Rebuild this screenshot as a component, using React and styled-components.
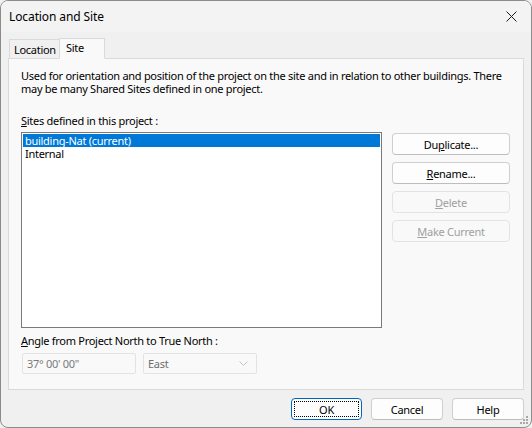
import React from "react";
import styled, { createGlobalStyle } from "styled-components";

const Global = createGlobalStyle`
  html, body {
    margin: 0;
    padding: 0;
    background: #f0f0f0;
  }
  body {
    font-family: "Noto Sans", "Liberation Sans", sans-serif;
    font-size: 11px;
    letter-spacing: -0.28px;
    color: #000;
  }
  * { box-sizing: border-box; }
`;

const Window = styled.div`
  position: relative;
  width: 532px;
  height: 428px;
  border: 1px solid #8c8c8c;
  border-radius: 8px;
  background: #f0f0f0;
  display: flex;
  flex-direction: column;
  overflow: hidden;
`;

const TitleBar = styled.div`
  height: 31px;
  display: flex;
  align-items: center;
  justify-content: space-between;
  padding: 0 14px 0 8px;
  background: #f3f3f3;
  font-size: 12px;
  letter-spacing: -0.1px;
`;

const CloseButton = styled.div`
  width: 12px;
  height: 12px;
  display: flex;
  align-items: center;
  justify-content: center;
`;

const Body = styled.div`
  flex: 1;
  display: flex;
  flex-direction: column;
  padding: 6px 7px 0 7px;
`;

const TabStrip = styled.div`
  display: flex;
  align-items: flex-end;
  height: 20px;
  padding-left: 1px;
  position: relative;
  z-index: 1;
`;

const Tab = styled.div`
  width: ${(p) => p.$width}px;
  height: ${(p) => (p.$active ? "21px" : "19px")};
  padding: ${(p) => (p.$active ? "1px 0 0 6px" : "2px 0 0 4px")};
  border: 1px solid #d9d9d9;
  border-bottom: ${(p) => (p.$active ? "1px solid #f9f9f9" : "none")};
  background: ${(p) => (p.$active ? "#f9f9f9" : "#f0f0f0")};
  margin-bottom: ${(p) => (p.$active ? "-1px" : "0")};
  margin-left: ${(p) => (p.$active ? "-1px" : "0")};
  line-height: 16px;
  white-space: nowrap;
`;

const Panel = styled.div`
  height: 332px;
  border: 1px solid #dadada;
  background: #f9f9f9;
  padding: 10px 12px 0 12px;
  display: flex;
  flex-direction: column;
`;

const Description = styled.p`
  margin: 0;
  line-height: 13px;
  width: 485px;
`;

const Label = styled.div`
  margin-top: ${(p) => p.$top || 0}px;
  line-height: 13px;
`;

const SitesRow = styled.div`
  display: grid;
  grid-template-columns: 361px 118px;
  column-gap: 10px;
  margin-top: 5px;
`;

const ListBox = styled.div`
  height: 196px;
  border: 1px solid #7a7a7a;
  background: #fff;
  padding: 1px;
`;

const ListItem = styled.div`
  height: 13px;
  line-height: 13px;
  padding-left: 2px;
  background: ${(p) => (p.$selected ? "#0078d7" : "transparent")};
  color: ${(p) => (p.$selected ? "#fff" : "#000")};
  white-space: nowrap;
`;

const ButtonColumn = styled.div`
  display: flex;
  flex-direction: column;
  gap: 7px;
  padding-top: 1px;
`;

const Button = styled.div`
  position: relative;
  height: 22px;
  width: ${(p) => p.$width || "auto"};
  display: flex;
  align-items: center;
  justify-content: center;
  border: 1px solid ${(p) => (p.$focused ? "#0067c0" : p.$disabled ? "#e3e3e3" : "#cfcfcf")};
  border-bottom-color: ${(p) => (p.$focused ? "#0067c0" : p.$disabled ? "#e3e3e3" : "#bdbdbd")};
  border-radius: 4px;
  background: ${(p) => (p.$disabled ? "#f9f9f9" : "#fdfdfd")};
  color: ${(p) => (p.$disabled ? "#a0a0a0" : "#000")};
`;

const FocusRing = styled.span`
  position: absolute;
  inset: 2px;
  border: 1px dotted #000;
  border-radius: 1px;
`;

const FieldRow = styled.div`
  display: flex;
  gap: 7px;
  margin-top: 6px;
  padding-left: 1px;
`;

const Field = styled.div`
  width: ${(p) => p.$width}px;
  height: 21px;
  border: 1px solid #e3e3e3;
  border-radius: 2px;
  background: #f9f9f9;
  color: ${(p) => p.$color || "#7a7a7a"};
  display: flex;
  align-items: center;
  justify-content: space-between;
  padding: 0 8px 0 4px;
`;

const Footer = styled.div`
  flex: 1;
  display: flex;
  justify-content: flex-end;
  align-items: flex-start;
  gap: 9px;
  padding-top: 8px;
`;

const Grip = styled.svg`
  position: absolute;
  right: 2px;
  bottom: 2px;
`;

const Chevron = () => (
  <svg width="9" height="5" viewBox="0 0 9 5">
    <path d="M0.5 0.5 L4.5 4.5 L8.5 0.5" fill="none" stroke="#c2c2c2" strokeWidth="1" />
  </svg>
);

const sites = [
  { name: "building-Nat (current)", selected: true },
  { name: "Internal" },
];

export default function App() {
  return (
    <>
      <Global />
      <Window>
        <TitleBar>
          <span>Location and Site</span>
          <CloseButton>
            <svg width="11" height="11" viewBox="0 0 11 11">
              <path d="M0.5 0.5 L10.5 10.5 M10.5 0.5 L0.5 10.5" stroke="#1a1a1a" strokeWidth="1" />
            </svg>
          </CloseButton>
        </TitleBar>
        <Body>
          <TabStrip>
            <Tab $width={51}>Location</Tab>
            <Tab $width={46} $active>
              Site
            </Tab>
          </TabStrip>
          <Panel>
            <Description>
              Used for orientation and position of the project on the site and in relation to other
              buildings. There may be many Shared Sites defined in one project.
            </Description>
            <Label $top={19}>
              <u>S</u>ites defined in this project :
            </Label>
            <SitesRow>
              <ListBox>
                {sites.map((s) => (
                  <ListItem key={s.name} $selected={s.selected}>
                    {s.name}
                  </ListItem>
                ))}
              </ListBox>
              <ButtonColumn>
                <Button>
                  Du<u>p</u>licate...
                </Button>
                <Button>
                  <u>R</u>ename...
                </Button>
                <Button $disabled>
                  <u>D</u>elete
                </Button>
                <Button $disabled>
                  <u>M</u>ake Current
                </Button>
              </ButtonColumn>
            </SitesRow>
            <Label $top={6}>
              <u>A</u>ngle from Project North to True North :
            </Label>
            <FieldRow>
              <Field $width={114}>37° 00' 00"</Field>
              <Field $width={114} $color="#6d6d6d">
                East
                <Chevron />
              </Field>
            </FieldRow>
          </Panel>
          <Footer>
            <Button $width="71px" $focused>
              <FocusRing />
              OK
            </Button>
            <Button $width="72px">Cancel</Button>
            <Button $width="72px">Help</Button>
          </Footer>
        </Body>
        <Grip width="9" height="9" viewBox="0 0 9 9">
          {[
            [7, 1],
            [4, 4],
            [7, 4],
            [1, 7],
            [4, 7],
            [7, 7],
          ].map(([x, y]) => (
            <rect key={`${x}-${y}`} x={x - 1} y={y - 1} width="2" height="2" fill="#a8a8a8" />
          ))}
        </Grip>
      </Window>
    </>
  );
}
